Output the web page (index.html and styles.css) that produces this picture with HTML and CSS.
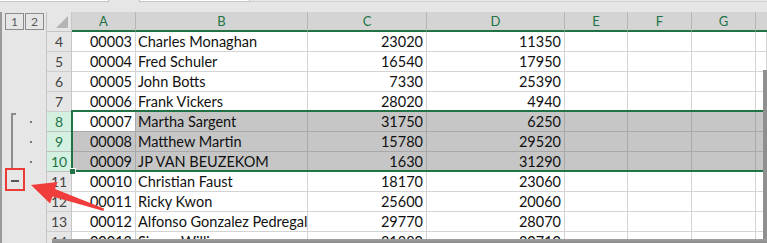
FILE: index.html
```html
<!DOCTYPE html>
<html>
<head>
<meta charset="utf-8">
<link rel="stylesheet" href="styles.css">
</head>
<body>
<div class="top">
  <div class="box b1"></div>
  <div class="box b2"></div>
  <div class="topline"></div>
</div>
<div class="main">
  <div class="outline">
    <div class="ol-head"><span class="lvl">1</span><span class="lvl">2</span></div>
    <div class="ol-row"></div>
    <div class="ol-row"></div>
    <div class="ol-row"></div>
    <div class="ol-row"></div>
    <div class="ol-group">
      <div class="bracket"></div>
      <div class="dots">
        <div class="dotrow"><i class="dot"></i></div>
        <div class="dotrow"><i class="dot"></i></div>
        <div class="dotrow"><i class="dot"></i></div>
      </div>
    </div>
    <div class="ol-row minus-row"><i class="minus"></i></div>
    <div class="ol-row"></div>
    <div class="ol-row"></div>
    <div class="ol-row"></div>
  </div>
  <div class="sheet">
    <div class="corner"><i class="tri"></i></div>
    <div class="ch">A</div><div class="ch">B</div><div class="ch">C</div><div class="ch">D</div><div class="ch">E</div><div class="ch">F</div><div class="ch">G</div><div class="ch last"></div>

    <div class="rh">4</div><div class="c n">00003</div><div class="c">Charles Monaghan</div><div class="c n">23020</div><div class="c n">11350</div><div class="c"></div><div class="c"></div><div class="c"></div><div class="c"></div>
    <div class="rh">5</div><div class="c n">00004</div><div class="c">Fred Schuler</div><div class="c n">16540</div><div class="c n">17950</div><div class="c"></div><div class="c"></div><div class="c"></div><div class="c"></div>
    <div class="rh">6</div><div class="c n">00005</div><div class="c">John Botts</div><div class="c n">7330</div><div class="c n">25390</div><div class="c"></div><div class="c"></div><div class="c"></div><div class="c"></div>
    <div class="rh">7</div><div class="c n">00006</div><div class="c">Frank Vickers</div><div class="c n">28020</div><div class="c n">4940</div><div class="c"></div><div class="c"></div><div class="c"></div><div class="c"></div>

    <div class="rh hi">8</div><div class="c n active">00007</div><div class="c s">Martha Sargent</div><div class="c n s">31750</div><div class="c n s">6250</div><div class="c s"></div><div class="c s"></div><div class="c s"></div><div class="c s"></div>
    <div class="rh hi">9</div><div class="c n s">00008</div><div class="c s">Matthew Martin</div><div class="c n s">15780</div><div class="c n s">29520</div><div class="c s"></div><div class="c s"></div><div class="c s"></div><div class="c s"></div>
    <div class="rh hi">10</div><div class="c n s">00009</div><div class="c s">JP VAN BEUZEKOM</div><div class="c n s">1630</div><div class="c n s">31290</div><div class="c s"></div><div class="c s"></div><div class="c s"></div><div class="c s"></div>

    <div class="rh">11</div><div class="c n">00010</div><div class="c">Christian Faust</div><div class="c n">18170</div><div class="c n">23060</div><div class="c"></div><div class="c"></div><div class="c"></div><div class="c"></div>
    <div class="rh">12</div><div class="c n">00011</div><div class="c">Ricky Kwon</div><div class="c n">25600</div><div class="c n">20060</div><div class="c"></div><div class="c"></div><div class="c"></div><div class="c"></div>
    <div class="rh">13</div><div class="c n">00012</div><div class="c">Alfonso Gonzalez Pedregal</div><div class="c n">29770</div><div class="c n">28070</div><div class="c"></div><div class="c"></div><div class="c"></div><div class="c"></div>
    <div class="rh">14</div><div class="c n">00013</div><div class="c">Simon Williams</div><div class="c n">31880</div><div class="c n">30710</div><div class="c"></div><div class="c"></div><div class="c"></div><div class="c"></div>

    <div class="selection"><i class="handle"></i></div>
  </div>
</div>
<div class="shadow-right"></div>
<div class="shadow-bottom"></div>
<svg class="annot" width="767" height="243" viewBox="0 0 767 243">
  <rect x="6" y="169" width="18" height="21" fill="none" stroke="#ec3b36" stroke-width="2"/>
  <polygon points="31,185 57.5,182 55,189 104,208.5 103.5,211 52.5,196.5 50,203.5" fill="#f03c3a"/>
</svg>
</body>
</html>
```
FILE: styles.css
```css
html, body {
  margin: 0;
  padding: 0;
}
body {
  width: 767px;
  height: 243px;
  overflow: hidden;
  position: relative;
  background: #e6e6e6;
  font-family: Lato, "Open Sans", "Liberation Sans", sans-serif;
}
.top {
  height: 12px;
  display: flex;
  align-items: flex-start;
  background: #e6e6e6;
  position: relative;
}
.box {
  height: 1px;
  background: #fff;
  border-bottom: 1px solid #c4c4c4;
  border-right: 1px solid #c4c4c4;
}
.b1 { width: 108px; }
.b2 { width: 109px; margin-left: 30px; border-left: 1px solid #c4c4c4; }
.topline {
  flex: 1;
  margin-top: 1px;
  height: 1px;
  background: #d2d2d2;
}
.main {
  display: flex;
  height: 231px;
  border-left: 2px solid #9a9a9a;
}
.outline {
  width: 44px;
  background: #e6e6e6;
  flex: none;
}
.ol-head {
  height: 20px;
  display: flex;
  gap: 1px;
  padding: 1px 0 0 3px;
  box-sizing: border-box;
}
.lvl {
  width: 19px;
  height: 17px;
  box-sizing: border-box;
  border: 1px solid #8c8c8c;
  font-size: 12px;
  line-height: 15px;
  text-align: center;
  color: #5a5a5a;
}
.ol-row { height: 20px; }
.ol-group {
  height: 60px;
  display: flex;
  padding-left: 9px;
}
.bracket {
  width: 3px;
  height: 54px;
  margin-top: 1px;
  border-left: 2px solid #8c8c8c;
  border-top: 2px solid #8c8c8c;
}
.dots { margin-left: 14px; }
.dotrow {
  height: 20px;
  display: flex;
  align-items: center;
}
.dot {
  display: block;
  width: 2px;
  height: 2px;
  background: #7a7a7a;
}
.minus-row {
  display: flex;
  align-items: center;
  padding-left: 9px;
  box-sizing: border-box;
}
.minus {
  display: block;
  width: 8px;
  height: 2px;
  margin-top: -3px;
  background: #555;
}
.sheet {
  flex: 1;
  display: grid;
  grid-template-columns: 26px 64px 172px 119px 138px 63px 64px 64px 1fr;
  grid-template-rows: 20px;
  grid-auto-rows: 20px;
  position: relative;
  background: #fff;
}
.corner {
  background: #e6e6e6;
  border-left: 1px solid #c6c6c6;
  border-right: 1px solid #c6c6c6;
  border-bottom: 1px solid #c6c6c6;
  position: relative;
}
.tri {
  position: absolute;
  right: 3px;
  bottom: 3px;
  width: 0;
  height: 0;
  border-left: 12px solid transparent;
  border-bottom: 12px solid #b4b4b4;
}
.ch {
  background: #d4d4d4;
  border-right: 1px solid #b5b5b5;
  border-bottom: 2px solid #217346;
  color: #217346;
  font-size: 13px;
  line-height: 18px;
  text-align: center;
}
.ch.last { border-right: none; }
.rh {
  background: #e6e6e6;
  border-left: 1px solid #c6c6c6;
  border-right: 1px solid #c6c6c6;
  border-bottom: 1px solid #cdcdcd;
  color: #444;
  font-size: 14px;
  line-height: 20px;
  text-align: center;
}
.rh.hi {
  background: #d3f0e0;
  color: #217346;
  border-bottom-color: #c0c0c0;
}
.c {
  background: #fff;
  border-right: 1px solid #d4d4d4;
  border-bottom: 1px solid #d4d4d4;
  font-size: 14.5px;
  line-height: 20px;
  padding: 0 2px;
  color: #111;
  white-space: nowrap;
  overflow: hidden;
}
.c.n {
  text-align: right;
  padding-right: 3px;
}
.c.s {
  background: #c6c6c6;
  border-right-color: #a9a9a9;
  border-bottom-color: #a9a9a9;
}
.c.active {
  background: #fff;
  border-right-color: #a9a9a9;
  border-bottom-color: #a9a9a9;
}
.selection {
  position: absolute;
  left: 25px;
  top: 98px;
  right: -4px;
  height: 62px;
  box-sizing: border-box;
  border: 2px solid #217346;
}
.handle {
  position: absolute;
  left: -3px;
  bottom: -4px;
  width: 5px;
  height: 5px;
  background: #217346;
  border: 1px solid #fff;
  border-left: none;
  border-bottom: none;
}
.shadow-right {
  position: absolute;
  right: 0;
  top: 70px;
  bottom: 0;
  width: 4px;
  background: #8f8f8f;
}
.shadow-bottom {
  position: absolute;
  left: 52px;
  right: 0;
  top: 239px;
  height: 4px;
  background: linear-gradient(#a0a0a0, #8a8a8a);
}
.annot {
  position: absolute;
  left: 0;
  top: 0;
  pointer-events: none;
}
```
